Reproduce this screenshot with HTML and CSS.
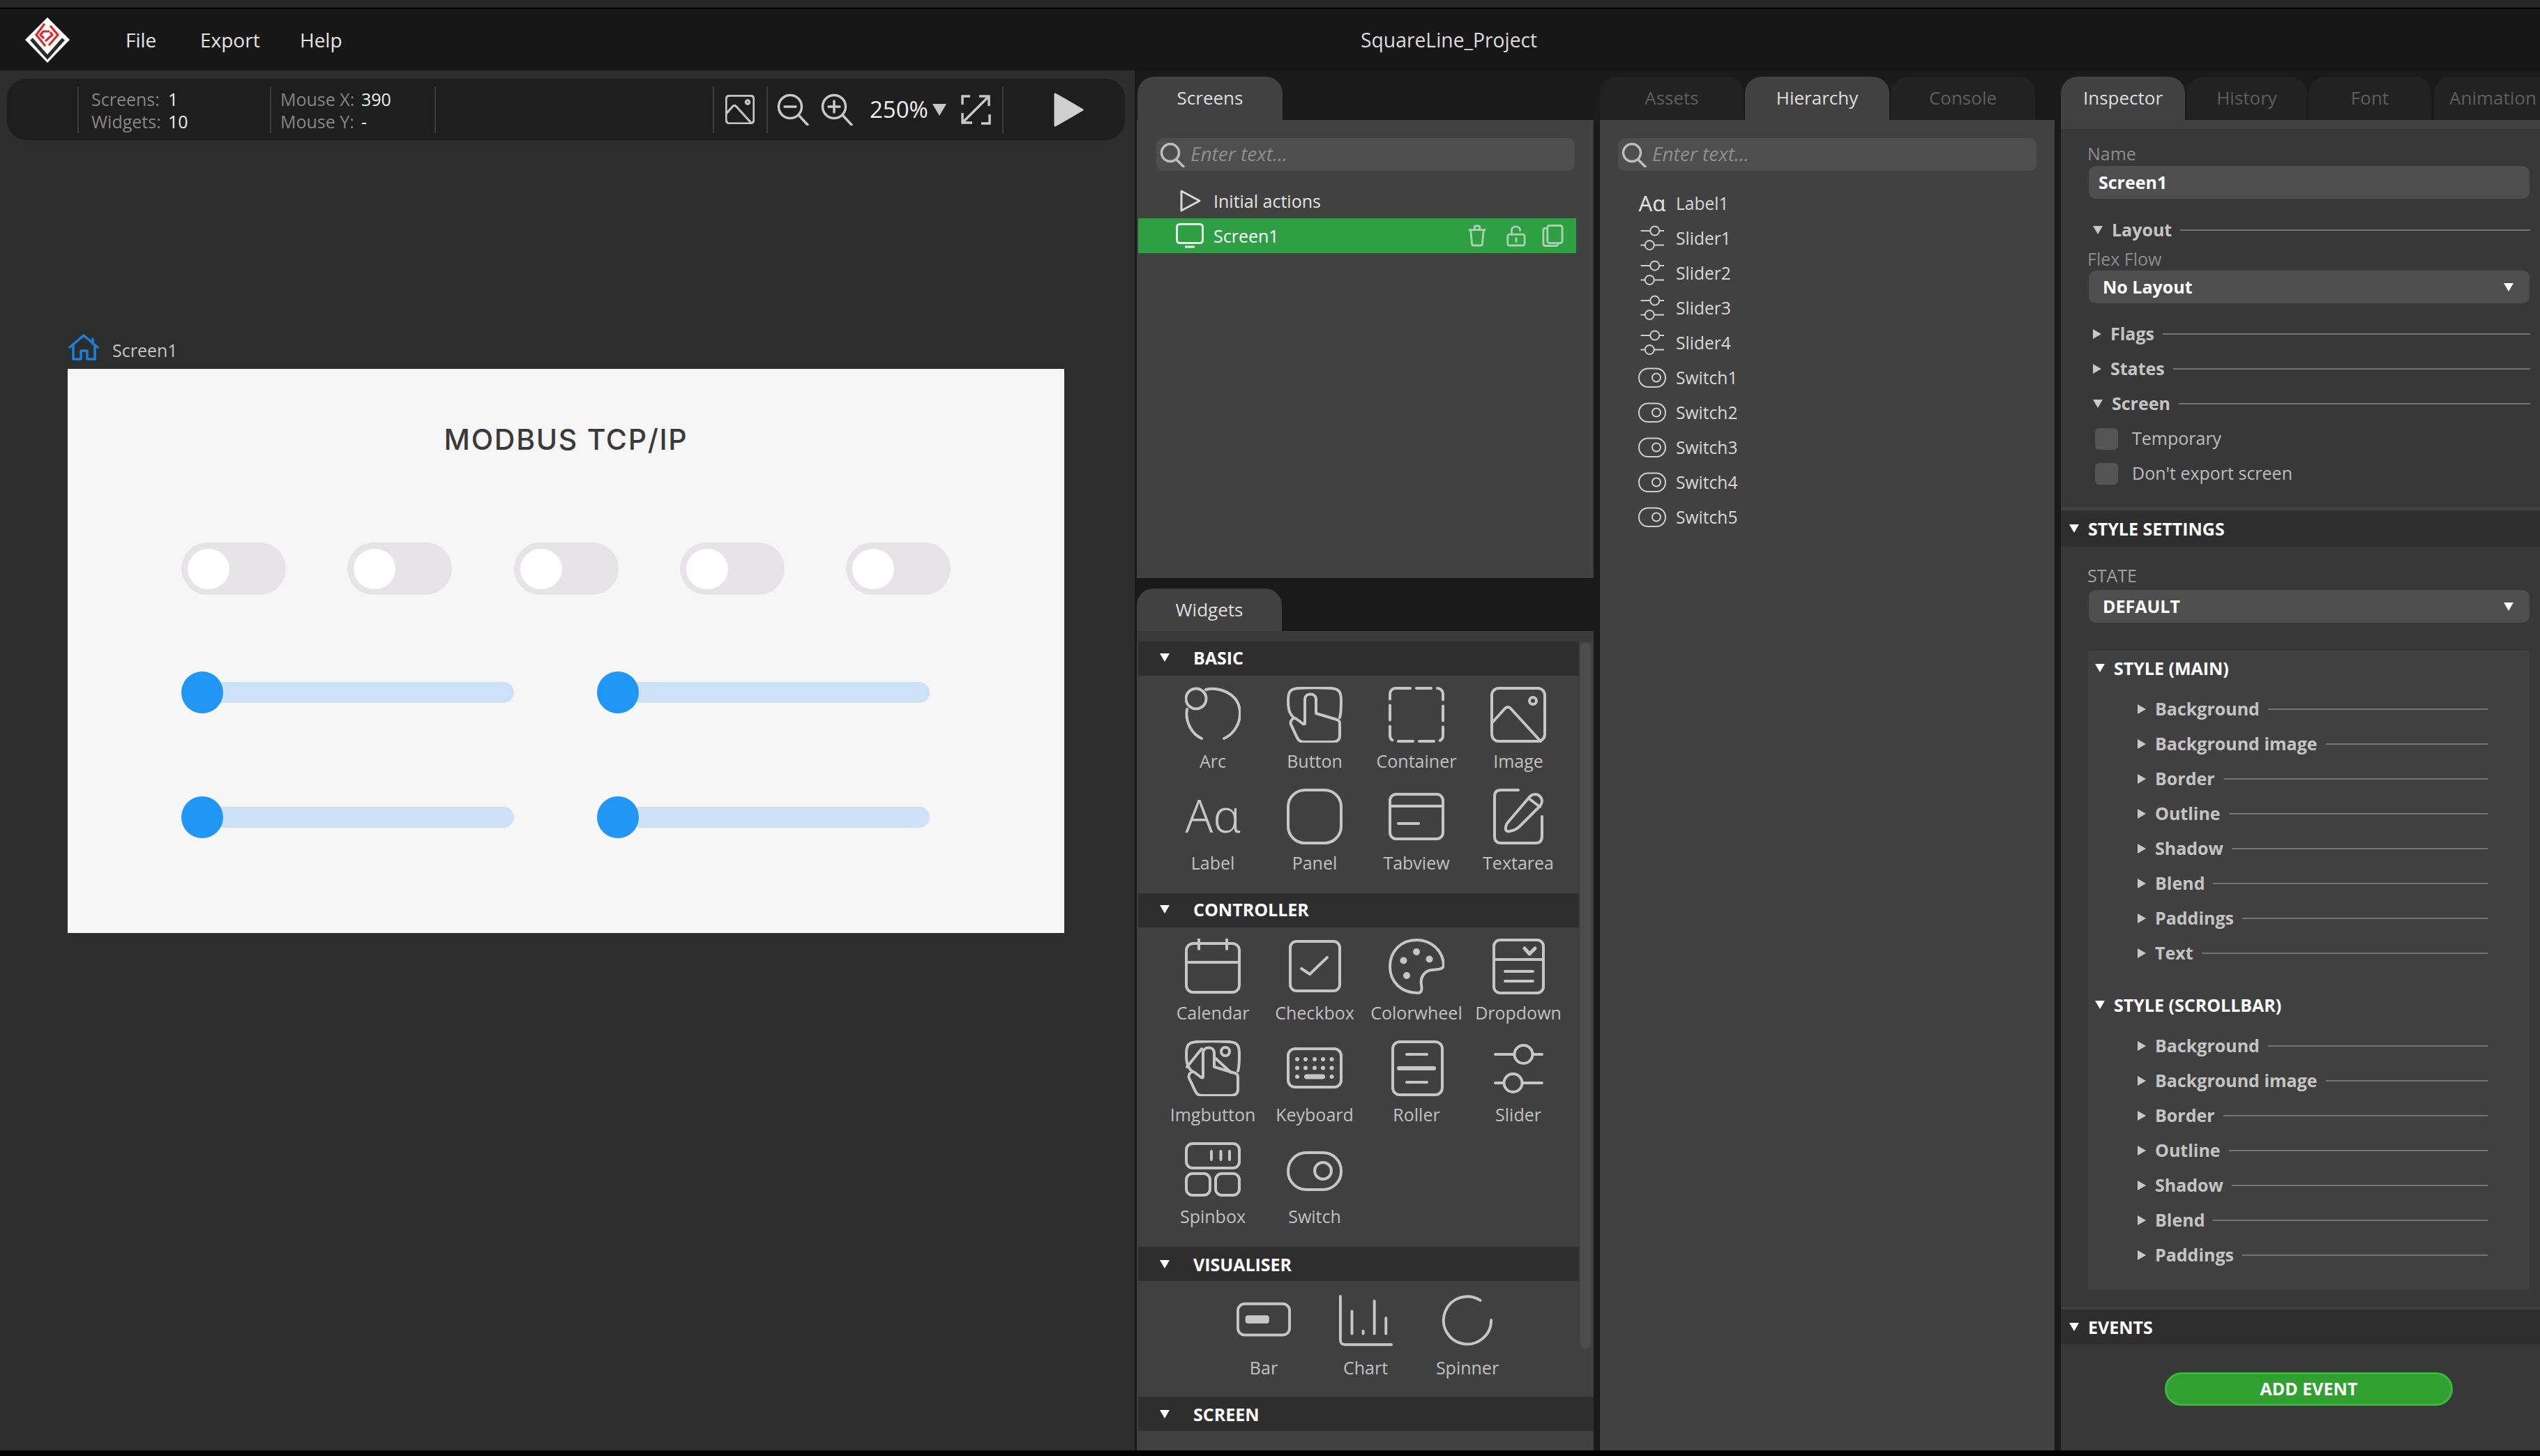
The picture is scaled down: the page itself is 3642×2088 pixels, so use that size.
FILE: index.html
```html
<!DOCTYPE html>
<html>
<head>
  <title>SquareLine_Project</title>
  <link rel="stylesheet" href="styles.css">
</head>
<body>
  <svg class="defs" xmlns="http://www.w3.org/2000/svg">
    <symbol id="i-arc" viewBox="0 0 80 80"><circle cx="16" cy="17" r="14.5"/><path d="M30 4C46 -1 79 8 79 38C79 55 68 69 56 74M3 32C0 50 10 68 24 74"/></symbol>
    <symbol id="i-button" viewBox="0 0 80 80"><path d="M10 44C3 38 2 30 2 20C2 8 4 3 16 2C30 1 50 1 64 2C76 3 78 8 78 20C78 30 78 38 76 44"/><path d="M26 52V18C26 8 42 8 42 18V38L72 47C75 48 76 50 76 53V70C76 76 72 79 66 79H24C20 79 17 77 15 73L6 54C4 48 10 43 14 46L22 52C24 54 26 54 26 52Z"/></symbol>
    <symbol id="i-container" viewBox="0 0 80 80"><rect x="2" y="2" width="76" height="76" rx="8" stroke-dasharray="21 9"/></symbol>
    <symbol id="i-image" viewBox="0 0 80 80"><rect x="2" y="2" width="76" height="76" rx="10"/><circle cx="61" cy="20" r="5"/><path d="M2 52L20 32C23 28 27 28 30 32L72 78"/></symbol>
    <symbol id="i-panel" viewBox="0 0 80 80"><rect x="2" y="2" width="76" height="76" rx="24"/></symbol>
    <symbol id="i-tabview" viewBox="0 0 80 80"><rect x="2" y="8" width="76" height="64" rx="9"/><path d="M2 25H78M14 50H43"/></symbol>
    <symbol id="i-textarea" viewBox="0 0 80 80"><path d="M40 2H15C9 2 6 5 6 11V68C6 75 9 78 15 78H65C71 78 74 75 74 68V40"/><path d="M22 56C22 52 24 49 27 46L56 12C60 7 67 7 71 11C75 15 75 20 71 25L42 54C38 58 34 60 28 61C24 62 21 60 22 56ZM55 14L71 26"/></symbol>
    <symbol id="i-calendar" viewBox="0 0 80 80"><rect x="2" y="7" width="76" height="70" rx="10"/><path d="M2 34H78M20 1V15M60 1V15"/></symbol>
    <symbol id="i-checkbox" viewBox="0 0 80 80"><rect x="5" y="4" width="71" height="71" rx="9"/><path d="M21 43L33 51L58 27"/></symbol>
    <symbol id="i-colorwheel" viewBox="0 0 80 80"><path d="M79 38C78 16 60 2 40 2C18 2 2 18 2 40C2 62 18 78 42 78C48 78 48 72 47 66C45 55 52 46 62 45C72 44 79 44 79 38Z"/><g class="dots"><circle cx="40" cy="19" r="5"/><circle cx="21.5" cy="31.5" r="5"/><circle cx="58.5" cy="29.5" r="5"/><circle cx="26" cy="53" r="5"/></g></symbol>
    <symbol id="i-dropdown" viewBox="0 0 80 80"><rect x="5" y="2" width="71" height="76" rx="9"/><path d="M5 30H76M21 47H61M21 61H61"/><path d="M49 14L56 22L64 14" stroke-width="5"/></symbol>
    <symbol id="i-imgbutton" viewBox="0 0 80 80"><path d="M10 44C3 38 2 30 2 20C2 8 4 3 16 2C30 1 50 1 64 2C76 3 78 8 78 20C78 30 78 38 76 44"/><path d="M26 52V18C26 8 42 8 42 18V38L72 47C75 48 76 50 76 53V70C76 76 72 79 66 79H24C20 79 17 77 15 73L6 54C4 48 10 43 14 46L22 52C24 54 26 54 26 52Z"/><circle cx="58" cy="16" r="6"/><path d="M3 38L24 12M42 24L66 46"/></symbol>
    <symbol id="i-keyboard" viewBox="0 0 80 80"><rect x="2" y="12" width="76" height="55" rx="10"/><g class="dots"><circle cx="15" cy="27" r="3"/><circle cx="27" cy="27" r="3"/><circle cx="40" cy="27" r="3"/><circle cx="52" cy="27" r="3"/><circle cx="64.5" cy="27" r="3"/><circle cx="15" cy="39.5" r="3"/><circle cx="27" cy="39.5" r="3"/><circle cx="40" cy="39.5" r="3"/><circle cx="52" cy="39.5" r="3"/><circle cx="64.5" cy="39.5" r="3"/><circle cx="15" cy="52" r="3"/><circle cx="64.5" cy="52" r="3"/><rect x="25" y="48.5" width="30" height="7" rx="3.5"/></g></symbol>
    <symbol id="i-roller" viewBox="0 0 80 80"><rect x="6" y="2" width="71" height="76" rx="10"/><path d="M26 20H55M26 60H55"/><path d="M15 40H65" stroke-width="6"/></symbol>
    <symbol id="i-slider" viewBox="0 0 80 80"><circle cx="47.5" cy="20" r="13"/><circle cx="32.5" cy="61" r="13"/><path d="M7 20H34M61 20H74M7 61H19M46 61H74"/></symbol>
    <symbol id="i-spinbox" viewBox="0 0 80 80"><rect x="2" y="2" width="76" height="35" rx="9"/><rect x="2" y="45" width="34" height="31" rx="9"/><rect x="44" y="45" width="34" height="31" rx="9"/><path d="M38 13V25M51.5 13V25M64 13V25"/></symbol>
    <symbol id="i-switch" viewBox="0 0 80 80"><rect x="2" y="15" width="76" height="53" rx="26"/><circle cx="52" cy="41" r="12"/></symbol>
    <symbol id="i-bar" viewBox="0 0 80 80"><rect x="2" y="13" width="76" height="46" rx="10"/><rect class="solid" x="13" y="30" width="35" height="12" rx="4"/></symbol>
    <symbol id="i-chart" viewBox="0 0 80 80"><path d="M3 2V66C3 71 5 73 10 73H78M20 24V57M36.5 53V57M53 9V57M70 34V57"/></symbol>
    <symbol id="i-spinner" viewBox="0 0 80 80"><path d="M59 8A35 35 0 1 0 75 37"/></symbol>
    <symbol id="i-search" viewBox="0 0 36 36"><circle cx="15" cy="15" r="12.5"/><path d="M24 25L34 35"/></symbol>
  </svg>

  <div class="topstrip"></div>

  <header class="header">
    <div class="menu-side">
      <svg class="logo" viewBox="0 0 64 65">
        <path d="M32 0L64 32L32 65L0 32Z" fill="#fff"/>
        <path d="M9 31L32 57L55 31" fill="none" stroke="#2b2b2b" stroke-width="5"/>
        <path d="M28 9L16 25L29 41M36 12L47 25L34 40M35 20H26L22 25L27 30M29 34L39 25L36 21" fill="none" stroke="#d92b2b" stroke-width="3.2"/>
      </svg>
      <nav class="menu">
        <span class="menu-file">File</span>
        <span class="menu-export">Export</span>
        <span>Help</span>
      </nav>
    </div>
    <div class="app-title">SquareLine_Project</div>
  </header>

  <main class="main">
    <section class="viewport">
      <div class="toolbar">
        <span class="sep"></span>
        <div class="stats stats-project">
          <span class="stat-label">Screens:</span><span class="stat-value">1</span>
          <span class="stat-label">Widgets:</span><span class="stat-value">10</span>
        </div>
        <span class="sep"></span>
        <div class="stats stats-mouse">
          <span class="stat-label">Mouse X:</span><span class="stat-value">390</span>
          <span class="stat-label">Mouse Y:</span><span class="stat-value">-</span>
        </div>
        <span class="sep"></span>
        <span class="toolbar-space"></span>
        <span class="sep"></span>
        <svg class="icon tool-image"><use href="#i-image"/></svg>
        <span class="sep"></span>
        <svg class="tool-zoom tool-zoom-out" viewBox="0 0 46 46"><circle cx="19" cy="19" r="16.5"/><path d="M31 31L44 45M11 19H27" /></svg>
        <svg class="tool-zoom tool-zoom-in" viewBox="0 0 46 46"><circle cx="19" cy="19" r="16.5"/><path d="M31 31L44 45M11 19H27M19 11V27"/></svg>
        <span class="zoom-value">250%</span>
        <span class="zoom-arrow"></span>
        <svg class="tool-expand" viewBox="0 0 44 44"><path d="M14 3H3V15M42 29V42H30M5 39L39 5M27 3H41V17M3 27V41H17"/></svg>
        <span class="sep"></span>
        <svg class="tool-play" viewBox="0 0 45 51"><path d="M3 3L42 25.5L3 48Z"/></svg>
      </div>

      <div class="crumb">
        <svg class="home-icon" viewBox="0 0 44 38"><path d="M2 19L22 2L42 19M35 7V14M7 16V36H18V24H27V36H38V16"/></svg>
        <span>Screen1</span>
      </div>

      <div class="canvas">
        <div class="canvas-title">MODBUS TCP/IP</div>
        <div class="switch-row">
          <div class="demo-switch"><span class="demo-switch-knob"></span></div>
          <div class="demo-switch"><span class="demo-switch-knob"></span></div>
          <div class="demo-switch"><span class="demo-switch-knob"></span></div>
          <div class="demo-switch"><span class="demo-switch-knob"></span></div>
          <div class="demo-switch"><span class="demo-switch-knob"></span></div>
        </div>
        <div class="slider-grid">
          <div class="demo-slider"><span class="demo-slider-knob"></span></div>
          <div class="demo-slider"><span class="demo-slider-knob"></span></div>
          <div class="demo-slider"><span class="demo-slider-knob"></span></div>
          <div class="demo-slider"><span class="demo-slider-knob"></span></div>
        </div>
      </div>
    </section>

    <section class="col-screens">
      <div class="tabs">
        <div class="tab active tab-solo">Screens</div>
      </div>
      <div class="panel panel-screens">
        <div class="search">
          <svg class="search-icon"><use href="#i-search"/></svg>
          <span>Enter text...</span>
        </div>
        <div class="screen-row">
          <svg class="row-play" viewBox="0 0 32 34"><path d="M3 3L29 17L3 31Z"/></svg>
          <span>Initial actions</span>
        </div>
        <div class="screen-row selected">
          <svg class="row-monitor" viewBox="0 0 40 36"><rect x="1.500" y="1.500" width="37" height="27" rx="4"/><path d="M13 34H27"/></svg>
          <span class="screen-name">Screen1</span>
          <svg class="row-action act-trash" viewBox="0 0 30 34"><path d="M3 8H27M11 8V4C11 2 12 2 13 2H17C18 2 19 2 19 4V8M5 8L7 29C7 31 8 32 10 32H20C22 32 23 31 23 29L25 8"/></svg>
          <svg class="row-action act-lock" viewBox="0 0 30 34"><path d="M8 15V9C8 1 21 1 21 9"/><rect x="2" y="15" width="26" height="17" rx="3"/><path d="M15 21V26"/></svg>
          <svg class="row-action act-copy" viewBox="0 0 32 34"><rect x="8" y="2" width="22" height="26" rx="3"/><path d="M8 6H5C3 6 2 7 2 9V28C2 31 3 32 5 32H20C23 32 24 31 24 28"/></svg>
        </div>
      </div>

      <div class="tabs tabs-widgets">
        <div class="tab active tab-solo">Widgets</div>
      </div>
      <div class="panel panel-widgets">
        <div class="widget-scroll"></div>
        <div class="section-head"><span class="tri-down"></span>BASIC</div>
        <div class="widget-grid">
          <div class="widget"><svg class="icon"><use href="#i-arc"/></svg><span>Arc</span></div>
          <div class="widget"><svg class="icon"><use href="#i-button"/></svg><span>Button</span></div>
          <div class="widget"><svg class="icon"><use href="#i-container"/></svg><span>Container</span></div>
          <div class="widget"><svg class="icon"><use href="#i-image"/></svg><span>Image</span></div>
          <div class="widget"><div class="aa-icon">Aɑ</div><span>Label</span></div>
          <div class="widget"><svg class="icon"><use href="#i-panel"/></svg><span>Panel</span></div>
          <div class="widget"><svg class="icon"><use href="#i-tabview"/></svg><span>Tabview</span></div>
          <div class="widget"><svg class="icon"><use href="#i-textarea"/></svg><span>Textarea</span></div>
        </div>
        <div class="section-head"><span class="tri-down"></span>CONTROLLER</div>
        <div class="widget-grid">
          <div class="widget"><svg class="icon"><use href="#i-calendar"/></svg><span>Calendar</span></div>
          <div class="widget"><svg class="icon"><use href="#i-checkbox"/></svg><span>Checkbox</span></div>
          <div class="widget"><svg class="icon"><use href="#i-colorwheel"/></svg><span>Colorwheel</span></div>
          <div class="widget"><svg class="icon"><use href="#i-dropdown"/></svg><span>Dropdown</span></div>
          <div class="widget"><svg class="icon"><use href="#i-imgbutton"/></svg><span>Imgbutton</span></div>
          <div class="widget"><svg class="icon"><use href="#i-keyboard"/></svg><span>Keyboard</span></div>
          <div class="widget"><svg class="icon"><use href="#i-roller"/></svg><span>Roller</span></div>
          <div class="widget"><svg class="icon"><use href="#i-slider"/></svg><span>Slider</span></div>
          <div class="widget"><svg class="icon"><use href="#i-spinbox"/></svg><span>Spinbox</span></div>
          <div class="widget"><svg class="icon"><use href="#i-switch"/></svg><span>Switch</span></div>
        </div>
        <div class="section-head section-head-low"><span class="tri-down"></span>VISUALISER</div>
        <div class="widget-grid widget-grid-three">
          <div class="widget"><svg class="icon"><use href="#i-bar"/></svg><span>Bar</span></div>
          <div class="widget"><svg class="icon"><use href="#i-chart"/></svg><span>Chart</span></div>
          <div class="widget"><svg class="icon"><use href="#i-spinner"/></svg><span>Spinner</span></div>
        </div>
        <div class="section-head section-head-low section-head-wide"><span class="tri-down"></span>SCREEN</div>
      </div>
    </section>

    <section class="col-hierarchy">
      <div class="tabs">
        <div class="tab tab-assets">Assets</div>
        <div class="tab active tab-hierarchy">Hierarchy</div>
        <div class="tab tab-console">Console</div>
      </div>
      <div class="panel panel-hierarchy">
        <div class="search">
          <svg class="search-icon"><use href="#i-search"/></svg>
          <span>Enter text...</span>
        </div>
        <ul class="tree">
          <li><span class="aa-small">Aɑ</span>Label1</li>
          <li><svg class="tree-icon"><use href="#i-slider"/></svg>Slider1</li>
          <li><svg class="tree-icon"><use href="#i-slider"/></svg>Slider2</li>
          <li><svg class="tree-icon"><use href="#i-slider"/></svg>Slider3</li>
          <li><svg class="tree-icon"><use href="#i-slider"/></svg>Slider4</li>
          <li><svg class="tree-icon"><use href="#i-switch"/></svg>Switch1</li>
          <li><svg class="tree-icon"><use href="#i-switch"/></svg>Switch2</li>
          <li><svg class="tree-icon"><use href="#i-switch"/></svg>Switch3</li>
          <li><svg class="tree-icon"><use href="#i-switch"/></svg>Switch4</li>
          <li><svg class="tree-icon"><use href="#i-switch"/></svg>Switch5</li>
        </ul>
      </div>
    </section>

    <section class="col-inspector">
      <div class="tabs">
        <div class="tab active tab-inspector">Inspector</div>
        <div class="tab tab-history">History</div>
        <div class="tab tab-font">Font</div>
        <div class="tab tab-animation">Animation</div>
      </div>
      <div class="panel panel-inspector">
        <div class="field-label field-label-first">Name</div>
        <div class="text-input">Screen1</div>

        <div class="prop-row prop-layout"><span class="tri-down small"></span><span>Layout</span><i></i></div>
        <div class="field-label field-label-tight">Flex Flow</div>
        <div class="select">No Layout<span class="tri-down"></span></div>

        <div class="prop-row prop-flags"><span class="tri-right"></span><span>Flags</span><i></i></div>
        <div class="prop-row"><span class="tri-right"></span><span>States</span><i></i></div>
        <div class="prop-row"><span class="tri-down small"></span><span>Screen</span><i></i></div>
        <label class="check-row"><span class="check-box"></span>Temporary</label>
        <label class="check-row"><span class="check-box"></span>Don't export screen</label>

        <div class="insp-head insp-head-style"><span class="tri-down"></span>STYLE SETTINGS</div>
        <div class="field-label field-label-state">STATE</div>
        <div class="select">DEFAULT<span class="tri-down"></span></div>

        <div class="style-group">
          <div class="style-head"><span class="tri-down"></span>STYLE (MAIN)</div>
          <div class="style-rows">
            <div class="style-row"><span class="tri-right"></span><span>Background</span><i></i></div>
            <div class="style-row"><span class="tri-right"></span><span>Background image</span><i></i></div>
            <div class="style-row"><span class="tri-right"></span><span>Border</span><i></i></div>
            <div class="style-row"><span class="tri-right"></span><span>Outline</span><i></i></div>
            <div class="style-row"><span class="tri-right"></span><span>Shadow</span><i></i></div>
            <div class="style-row"><span class="tri-right"></span><span>Blend</span><i></i></div>
            <div class="style-row"><span class="tri-right"></span><span>Paddings</span><i></i></div>
            <div class="style-row"><span class="tri-right"></span><span>Text</span><i></i></div>
          </div>
          <div class="style-head style-head-next"><span class="tri-down"></span>STYLE (SCROLLBAR)</div>
          <div class="style-rows">
            <div class="style-row"><span class="tri-right"></span><span>Background</span><i></i></div>
            <div class="style-row"><span class="tri-right"></span><span>Background image</span><i></i></div>
            <div class="style-row"><span class="tri-right"></span><span>Border</span><i></i></div>
            <div class="style-row"><span class="tri-right"></span><span>Outline</span><i></i></div>
            <div class="style-row"><span class="tri-right"></span><span>Shadow</span><i></i></div>
            <div class="style-row"><span class="tri-right"></span><span>Blend</span><i></i></div>
            <div class="style-row"><span class="tri-right"></span><span>Paddings</span><i></i></div>
          </div>
        </div>

        <div class="insp-head insp-head-events"><span class="tri-down"></span>EVENTS</div>
        <button class="add-event">ADD EVENT</button>
      </div>
    </section>
  </main>
</body>
</html>
```

FILE: styles.css
```css
* {
  box-sizing: border-box;
}

html,
body {
  margin: 0;
  width: 3642px;
  height: 2088px;
  overflow: hidden;
}

body {
  background-color: #000;
  color: #ddd;
  font-family: "Open Sans", "Noto Sans", sans-serif;
  font-size: 25px;
}

.defs {
  display: block;
  width: 0;
  height: 0;
}

.topstrip {
  height: 13px;
  background-color: #262626;
  border-bottom: 2px solid #000;
}

.header {
  display: flex;
  align-items: center;
  height: 88px;
  background-color: #171717;
}

.menu-side {
  display: flex;
  align-items: center;
  width: 1951px;
  padding-left: 36px;
}

.logo {
  width: 64px;
  height: 65px;
}

.menu {
  display: flex;
  margin-left: 80px;
  color: #e4e4e4;
  font-size: 28px;
}

.menu-file {
  width: 107px;
}

.menu-export {
  width: 143px;
}

.app-title {
  color: #dcdcdc;
  font-size: 28.3px;
}

.main {
  display: flex;
  height: 1979px;
  background-color: #1a1a1a;
}

/* viewport */

.viewport {
  width: 1627px;
  background-color: #2d2d2d;
  flex-shrink: 0;
}

.toolbar {
  display: flex;
  align-items: center;
  width: 1603px;
  height: 88px;
  margin: 12px 0 0 10px;
  padding-left: 101px;
  background-color: #1e1e1e;
  border-radius: 28px;
}

.sep {
  width: 2px;
  height: 67px;
  background-color: #3d3d3d;
  flex-shrink: 0;
}

.stats {
  display: grid;
  padding-top: 2px;
  line-height: 32px;
}

.stats-project {
  grid-template-columns: 110px 1fr;
  width: 274px;
  padding-left: 18px;
}

.stats-mouse {
  grid-template-columns: 116px 1fr;
  width: 234px;
  padding-left: 13px;
}

.stat-label {
  color: #858585;
}

.stat-value {
  color: #eee;
}

.toolbar-space {
  width: 397px;
}

.icon {
  display: block;
  width: 80px;
  height: 80px;
  fill: none;
  stroke: #c6c6c6;
  stroke-width: 4;
  stroke-linecap: round;
  stroke-linejoin: round;
}

.dots,
.solid {
  fill: #c6c6c6;
  stroke: none;
}

.tool-image {
  width: 42px;
  height: 42px;
  margin: 0 17px 0 16px;
  stroke-width: 6;
}

.tool-zoom {
  width: 46px;
  height: 46px;
  fill: none;
  stroke: #c8c8c8;
  stroke-width: 3.5;
  stroke-linecap: round;
}

.tool-zoom-out {
  margin-left: 13px;
}

.tool-zoom-in {
  margin-left: 17px;
}

.zoom-value {
  margin-left: 24px;
  color: #eee;
  font-size: 33px;
  line-height: 40px;
}

.zoom-arrow {
  width: 0;
  height: 0;
  margin-left: 6px;
  border-left: 10px solid transparent;
  border-right: 10px solid transparent;
  border-top: 17px solid #c8c8c8;
}

.tool-expand {
  width: 44px;
  height: 44px;
  margin: 0 16px 0 20px;
  fill: none;
  stroke: #c8c8c8;
  stroke-width: 3.5;
}

.tool-play {
  width: 45px;
  height: 51px;
  margin-left: 71px;
  fill: #cfcfcf;
  stroke: #cfcfcf;
  stroke-width: 3;
  stroke-linejoin: round;
}

.crumb {
  display: flex;
  align-items: center;
  height: 38px;
  margin: 278px 0 12px 98px;
  color: #c4c4c4;
}

.crumb span {
  margin: 8px 0 0 19px;
}

.home-icon {
  width: 44px;
  height: 38px;
  fill: none;
  stroke: #1b7fd6;
  stroke-width: 3.5;
  stroke-linejoin: round;
  stroke-linecap: round;
}

.canvas {
  width: 1429px;
  height: 809px;
  margin-left: 97px;
  padding-left: 163px;
  padding-top: 71px;
  background-color: #f6f6f6;
}

.canvas-title {
  width: 1103px;
  height: 60px;
  color: #3a3a3a;
  font-family: "Inter", sans-serif;
  font-size: 41px;
  font-weight: 500;
  letter-spacing: 1.7px;
  line-height: 60px;
  text-align: center;
}

.switch-row {
  display: flex;
  gap: 88.3px;
  margin-top: 118px;
}

.demo-switch {
  display: flex;
  align-items: center;
  width: 150px;
  height: 75px;
  padding-left: 9px;
  background-color: #e7e4e7;
  border-radius: 38px;
}

.demo-switch-knob {
  width: 60px;
  height: 58px;
  background-color: #fff;
  border-radius: 50%;
}

.slider-grid {
  display: grid;
  grid-template-columns: 477px 477px;
  gap: 149px 119px;
  margin-top: 125px;
}

.demo-slider {
  display: flex;
  align-items: center;
  height: 30px;
  background-color: #cde2f7;
  border-radius: 15px;
}

.demo-slider-knob {
  width: 60px;
  height: 60px;
  background-color: #2196f5;
  border-radius: 50%;
}

/* shared panels */

.tabs {
  display: flex;
  gap: 2px;
  height: 71px;
  padding-top: 9px;
}

.tab {
  flex-shrink: 0;
  height: 62px;
  color: #5e5e5e;
  background-color: #222;
  border-radius: 24px 24px 0 0;
  font-size: 26px;
  line-height: 60px;
  text-align: center;
}

.tab.active {
  color: #dedede;
  background-color: #414141;
}

.tab-solo {
  width: 208px;
  margin-left: 1px;
}

.panel {
  background-color: #414141;
}

.search {
  display: flex;
  align-items: center;
  width: 600px;
  height: 47px;
  background-color: #4e4e4e;
  border-radius: 10px;
  padding-left: 5px;
  color: #8e8e8e;
  font-size: 28px;
  font-style: italic;
}

.search span {
  margin-bottom: 4px;
}

.search-icon {
  width: 36px;
  height: 36px;
  margin-right: 8px;
  fill: none;
  stroke: #bdbdbd;
  stroke-width: 3.5;
  stroke-linecap: round;
}

.tri-down {
  display: inline-block;
  width: 0;
  height: 0;
  border-left: 7px solid transparent;
  border-right: 7px solid transparent;
  border-top: 12px solid #fff;
}

.tri-down.small {
  border-top-color: #c8c8c8;
}

.tri-right {
  display: inline-block;
  width: 0;
  height: 0;
  border-top: 7px solid transparent;
  border-bottom: 7px solid transparent;
  border-left: 12px solid #c8c8c8;
}

/* screens column */

.col-screens {
  width: 655px;
  margin-left: 3px;
  flex-shrink: 0;
}

.panel-screens {
  height: 657px;
  padding-top: 26px;
}

.panel-screens .search {
  margin-left: 28px;
}

.screen-row {
  display: flex;
  align-items: center;
  width: 628px;
  height: 50px;
  margin-left: 2px;
  color: #e4e4e4;
}

.panel-screens .search + .screen-row {
  margin-top: 18px;
}

.row-play {
  width: 32px;
  height: 34px;
  margin: 0 17px 0 59px;
  fill: none;
  stroke: #d8d8d8;
  stroke-width: 3;
  stroke-linejoin: round;
}

.screen-row.selected {
  background-color: #2ea043;
  color: #fff;
}

.row-monitor {
  width: 40px;
  height: 36px;
  margin: 0 14px 0 54px;
  fill: none;
  stroke: #e4f2e6;
  stroke-width: 3;
}

.screen-name {
  flex: 1;
}

.row-action {
  height: 34px;
  fill: none;
  stroke: #a9d3b0;
  stroke-width: 3;
  stroke-linejoin: round;
  stroke-linecap: round;
}

.act-trash {
  width: 28px;
  margin-right: 28px;
}

.act-lock {
  width: 28px;
  margin-right: 23px;
}

.act-copy {
  width: 31px;
  margin-right: 18px;
}

.tabs-widgets {
  height: 76px;
  padding-top: 15px;
}

.tabs-widgets .tab {
  margin-left: 0;
  height: 61px;
}

.panel-widgets {
  position: relative;
  height: 1175px;
  padding: 15px 0 0 2px;
  background-image: linear-gradient(#3a3a3a, #3a3a3a);
  background-size: 100% 15px;
  background-repeat: no-repeat;
  background-color: #404040;
}

.widget-scroll {
  position: absolute;
  top: 17px;
  right: 4px;
  width: 15px;
  height: 1012px;
  background-color: #4d4d4d;
  border-radius: 8px;
}

.section-head {
  display: flex;
  align-items: center;
  width: 632px;
  height: 49px;
  padding-left: 31px;
  padding-bottom: 3px;
  background-color: #2e2e2e;
  color: #fff;
  font-weight: 700;
}

.section-head .tri-down {
  margin-right: 34px;
}

.section-head-low {
  padding-bottom: 0;
}

.section-head-wide {
  width: 653px;
}

.widget-grid {
  display: grid;
  grid-template-columns: repeat(4, 146px);
  row-gap: 21px;
  width: 632px;
  padding: 16px 0 25px 34px;
}

.widget-grid-three {
  grid-template-columns: repeat(3, 146px);
  padding-left: 107px;
}

.widget-grid-three .icon {
  margin-top: 4px;
}

.widget-grid-three span {
  margin-top: 5px;
}

.widget {
  display: flex;
  flex-direction: column;
  align-items: center;
  height: 125px;
  color: #c0c0c0;
}

.widget span {
  margin-top: 9px;
  line-height: 34px;
  white-space: nowrap;
}

.aa-icon {
  width: 80px;
  height: 80px;
  color: #c6c6c6;
  font-family: "Noto Sans", sans-serif;
  font-weight: 300;
  font-size: 66px;
  line-height: 74px;
  text-align: center;
  white-space: nowrap;
}

/* hierarchy column */

.col-hierarchy {
  width: 652px;
  margin-left: 9px;
  flex-shrink: 0;
}

.tab-assets {
  width: 206px;
}

.tab-hierarchy,
.tab-console {
  width: 207px;
}

.panel-hierarchy {
  height: 1908px;
  padding-top: 26px;
}

.panel-hierarchy .search {
  margin-left: 26px;
}

.tree {
  list-style: none;
  margin: 21px 0 0;
  padding: 0 0 0 55px;
  color: #d8d8d8;
  font-size: 24.6px;
}

.tree li {
  display: flex;
  align-items: center;
  height: 50px;
}

.tree-icon {
  width: 40px;
  height: 40px;
  margin-right: 14px;
  fill: none;
  stroke: #cfcfcf;
  stroke-width: 4;
}

.aa-small {
  width: 40px;
  margin-right: 14px;
  color: #e0e0e0;
  font-family: "Noto Sans", sans-serif;
  font-size: 31px;
  line-height: 40px;
  text-align: center;
  white-space: nowrap;
}

/* inspector column */

.col-inspector {
  flex: 1;
  margin-left: 9px;
  min-width: 0;
  overflow: hidden;
}

.tab-inspector {
  width: 178px;
}

.tab-history {
  width: 173px;
}

.tab-font {
  width: 176px;
}

.tab-animation {
  width: 178px;
  margin-left: 2px;
  padding-left: 22px;
  text-align: left;
}

.panel-inspector {
  height: 1908px;
  border-top: 13px solid #404040;
  background-color: #383838;
}

.field-label {
  height: 34px;
  margin-left: 38px;
  color: #8b8b8b;
  line-height: 34px;
}

.field-label-first {
  margin-top: 18px;
  margin-bottom: 1px;
}

.field-label-tight {
  margin-top: -1px;
}

.field-label-state {
  margin-top: 24px;
  margin-bottom: 4px;
  color: #a0a0a0;
}

.text-input,
.select {
  display: flex;
  align-items: center;
  justify-content: space-between;
  width: 632px;
  height: 47px;
  margin-left: 40px;
  padding-bottom: 1px;
  background-color: #4e4e4e;
  border-radius: 10px;
  color: #fff;
  font-weight: 700;
}

.text-input {
  margin-top: 1px;
  padding-left: 14px;
}

.select {
  padding-left: 20px;
  padding-right: 23px;
}

.select .tri-down {
  margin-top: 1px;
}

.prop-row,
.style-row {
  display: flex;
  align-items: center;
  height: 50px;
  padding-bottom: 3px;
  color: #c4c4c4;
  font-weight: 700;
}

.prop-row {
  width: 673px;
  padding-left: 46px;
}

.prop-row .tri-down,
.prop-row .tri-right {
  margin-top: 3px;
  margin-right: 13px;
}

.prop-row i,
.style-row i {
  flex: 1;
  height: 2px;
  margin-top: 3px;
  margin-left: 12px;
  background-color: #747474;
}

.prop-layout {
  margin-top: 20px;
}

.prop-flags {
  margin-top: 19px;
}

.check-row {
  display: flex;
  align-items: center;
  height: 50px;
  padding-left: 49px;
  padding-bottom: 3px;
  color: #bcbcbc;
}

.check-box {
  width: 33px;
  height: 31px;
  margin-top: 3px;
  margin-right: 20px;
  background-color: #555;
  border-radius: 6px;
}

.insp-head {
  display: flex;
  align-items: center;
  height: 57px;
  padding-left: 12px;
  background-color: #2e2e2e;
  border-top: 5px solid #404040;
  color: #fff;
  font-weight: 700;
}

.insp-head .tri-down {
  margin-right: 13px;
}

.insp-head-style {
  margin-top: 23px;
}

.insp-head-events {
  height: 54px;
  margin-top: 24px;
  border-top-width: 4px;
}

.style-group {
  width: 633px;
  height: 917px;
  margin: 40px 0 0 39px;
  padding-top: 1px;
  background-color: #404040;
}

.style-head {
  display: flex;
  align-items: center;
  height: 50px;
  padding-left: 10px;
  padding-bottom: 2px;
  color: #fff;
  font-weight: 700;
}

.style-head .tri-down {
  margin-right: 13px;
}

.style-head-next {
  margin-top: 25px;
}

.style-rows {
  padding: 8px 60px 0 71px;
}

.style-row .tri-right {
  margin-top: 3px;
  margin-right: 13px;
}

.add-event {
  display: block;
  width: 413px;
  height: 48px;
  margin: 40px 0 0 149px;
  padding: 0 0 2px;
  background-color: #30a030;
  border: 3px solid #3bb83b;
  border-radius: 24px;
  color: #fff;
  font-family: "Open Sans", sans-serif;
  font-size: 25px;
  font-weight: 700;
}
```
